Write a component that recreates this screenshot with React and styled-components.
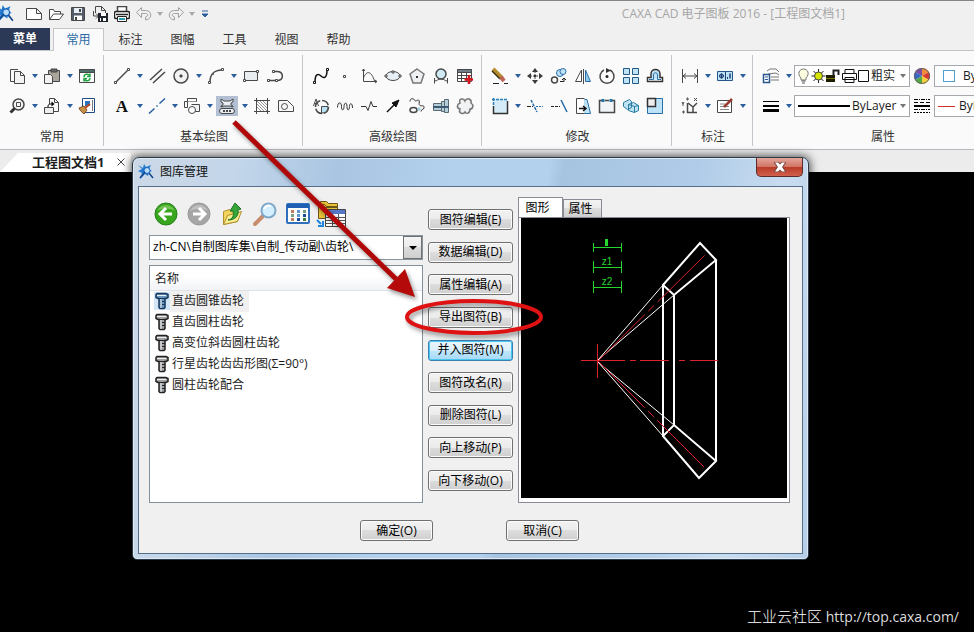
import React from "react";
import styled, { createGlobalStyle } from "styled-components";

const ink = "#484848";
const blue = "#2a6ea8";
const sky = "#bfe3f6";

const icons = {
  new: <path d="M.5 2.5h10l5 5v6H.5zM10.5 2.5v5h5" fill="#fff" />,
  open: (
    <path d="M1.5 13.5v-10h4l1 2h6v2.500M1.5 13.5l4-5.500h10l-4 5.500z" fill="#fff" />
  ),
  save: (
    <>
      <path d="M1.5 1.5h13v13h-13z" fill="#555d6a" />
      <path d="M4 2h8v5H4z" fill="#e8eef4" stroke="none" />
      <path d="M4 9.5h8V14H4z" fill="#fff" stroke="none" />
      <path d="M9 3h2v3H9zM5 11h2v3H5z" fill="#444" stroke="none" />
    </>
  ),
  saveAs: (
    <>
      <path d="M3.5 7V.5h6l4 4V7M9.5.5v4h4M1.5 5v5h5M4 7.5L6.5 10 4 12.5" />
      <path d="M6 7h10v9H6z" fill="#20242c" stroke="none" />
      <path d="M9 7h5v3H9zM8 12h6v3H8z" fill="#fff" stroke="none" />
      <path d="M9 12h2v3H9z" fill="#20242c" stroke="none" />
    </>
  ),
  print: (
    <>
      <path d="M3.5 5.5v-5h9v5" fill="#fff" strokeWidth="1.5" />
      <rect x=".5" y="5.5" width="15" height="7" rx="1.5" fill="#fff" strokeWidth="1.5" stroke="#222" />
      <path d="M2 8.5h12" stroke="#222" strokeWidth="1.5" />
      <path d="M3.5 10.5h9v5h-9z" fill="#fff" stroke="#222" />
      <path d="M5 12h6v2H5z" fill="#2a9aa8" stroke="none" />
    </>
  ),
  undo: (
    <path d="M.5 6.5l5-5v3h4c7 0 7 9 0 9.500v-3c3-.5 3-3.500 0-3.500h-4v4z" stroke="#a0a0a0" />
  ),
  redo: (
    <path d="M15.5 6.5l-5-5v3h-4c-7 0-7 9 0 9.500v-3c-3-.5-3-3.500 0-3.500h4v4z" stroke="#a0a0a0" />
  ),
  copy: (
    <>
      <path d="M9 1.5H1.5v12H5" />
      <path d="M5.5 3.5h6l4 4v8h-10zM11.5 3.5v4h4" fill="#f4f4f4" />
    </>
  ),
  paste: (
    <>
      <path d="M4.5 2.5h11v11h-11z" fill="#aaa59c" />
      <path d="M7 1h6v3H7z" fill="#666" stroke="#444" />
      <path d="M.5 6.5h6l2 2v7h-8z" fill="#f2f2f2" />
    </>
  ),
  refresh: (
    <>
      <path d="M.5 1.5h15v13H.5z" fill="#fff" />
      <path d="M.5 1.5h15v3H.5z" fill="#4c6f6a" />
      <path d="M5 9c0-3 4-4 6-1M11 5.5v3H8M11 10c0 3-4 4-6 1M5 13.5v-3h3" stroke="#23a246" strokeWidth="1.5" />
    </>
  ),
  zoom: (
    <>
      <circle cx="9.5" cy="6.5" r="5.5" strokeWidth="1.5" fill="#f5f5f5" />
      <path d="M7.5 4.5h4v4h-4z" />
      <path d="M5.5 10.5l-4 4" strokeWidth="3" stroke="#333" />
    </>
  ),
  insert: (
    <>
      <path d="M5.5 6V.5h5l4 4v9H10M10.5.5v4h4" />
      <path d="M.5 9.5h9v6h-9z" fill="#eee" />
      <path d="M4 9c0-3 1-3 4-3" stroke="#000" />
      <path d="M7.5 3.5l3 2.500-3 2.500z" fill="#000" stroke="none" />
    </>
  ),
  brush: (
    <>
      <path d="M3.5.5h12v14h-12z" fill="#fff" stroke="#234a80" />
      <path d="M6 3h5v5H6z" fill="#2d72bd" stroke="none" />
      <path d="M13.5 2v11" stroke="#777" />
      <path d="M0 10l5-2 3 4-3 4c-2-2-4-3-5-6z" fill="#c89146" stroke="#7b5428" />
      <path d="M6 10l5-4" stroke="#b94522" strokeWidth="2" />
    </>
  ),
  line: (
    <>
      <path d="M2 14L14 2" strokeWidth="1.5" />
      <path d="M.5 13.5h2v2h-2zM13.5.5h2v2h-2z" fill="#fff" />
    </>
  ),
  parallel: <path d="M1 12L13 1M4 15L16 4" strokeWidth="1.5" />,
  circle: (
    <>
      <circle cx="8" cy="8" r="7" fill="#f2f2f2" strokeWidth="1.5" />
      <path d="M7 7h2v2H7z" fill="#444" />
    </>
  ),
  arc: (
    <>
      <path d="M2 14C2 7 6 2 14 2" strokeWidth="1.5" />
      <path d="M.5 13.5h2v2h-2zM13.5.5h2v2h-2zM4.5 5.5h1v1h-1z" fill="#fff" />
    </>
  ),
  rect: (
    <>
      <path d="M1.5 3.5h13v9h-13z" fill="#e9edf0" />
      <path d="M.5 11.5h2v2h-2zM13.5 2.5h2v2h-2z" fill="#fff" />
    </>
  ),
  polyline: (
    <>
      <path d="M2 12.5h7M6 3.5h4c7 0 7 9 1 9" strokeWidth="1.5" />
      <path d="M.5 11.5h2v2h-2zM8.5 11.5h2v2h-2zM5.5 2.5h2v2h-2z" fill="#fff" />
    </>
  ),
  text: (
    <text x="8" y="14" textAnchor="middle" fontFamily="Liberation Serif" fontWeight="bold" fontSize="17" fill="#111" stroke="none">
      A
    </text>
  ),
  center: (
    <path d="M0 15.5l5.500-5M7.5 8.500l1-1M10.5 5.500L16 .5" stroke="#245da0" strokeWidth="1.5" />
  ),
  combine: (
    <>
      <path d="M3.5 9.5h-3v-6h3M12.5 4V.5h-9v9" />
      <path d="M3.5 3.5h9" stroke="#999" />
      <path d="M7.5 6.5h8v7H9" fill="#eef3f6" />
      <circle cx="8" cy="12" r="3.5" fill="#fff" />
    </>
  ),
  block: (
    <>
      <path d="M2 1l3 2h6l3-2v3l-2 1v2l2 1v1l-3-1H5L2 9V8l2-1V5L2 4z" fill="#e8eef3" />
      <rect x=".5" y="10.5" width="15" height="5" rx="2.5" fill="#e8eef3" />
      <path d="M4 13h2M7 13h2M10 13h2" strokeWidth="2" />
    </>
  ),
  hatch: (
    <>
      <path d="M3 6l7 7M3 3l10 10M6 3l7 7M9 3l4 4M3 9l4 4" stroke="#999" />
      <path d="M2.5 0v16M13.5 0v16M0 2.5h16M0 13.5h16" />
    </>
  ),
  contour: (
    <>
      <path d="M.5 2.5h9l6 6v5H.5z" fill="#f8f8f8" />
      <circle cx="6.5" cy="8.5" r="3" />
    </>
  ),
  spline: (
    <>
      <path d="M2 14c0-8 3-9 6-6s6 2 6-6" strokeWidth="1.5" stroke="#111" />
      <path d="M.5 13.5h2v2h-2zM13.5.5h2v2h-2z" fill="#fff" stroke="#111" />
    </>
  ),
  point: <path d="M6.5 7.5h2v2h-2z" />,
  formula: (
    <path d="M2.5 1v12.500H16M1 3l1.500-2L4 3M14 12l2 1.500-2 1.500M2.5 10c3-8 8-7 11 3" />
  ),
  ellipse: (
    <>
      <ellipse cx="8" cy="8" rx="7" ry="4.5" fill="#e6eff3" />
      <path d="M0 7h2v2H0zM14 7h2v2h-2zM7 3h2v2H7z" fill="#fff" />
    </>
  ),
  polygon: (
    <>
      <path d="M8 1l7 5-3 9H4L1 6z" fill="#eef1f3" strokeWidth="1.5" stroke="#777" />
      <path d="M7 8h2v2H7z" fill="#333" stroke="none" />
    </>
  ),
  hole: (
    <>
      <circle cx="8" cy="6" r="5" fill="#cfeaf4" strokeWidth="1.5" />
      <path d="M1.5 10v5.500M14.5 10v5.500M1.5 13c3 0 3-2 6.500-2s3.500 2 6.500 2" />
    </>
  ),
  table: (
    <>
      <path d="M.5 1.5h14v12H.5z" fill="#fff" />
      <path d="M.5 1.5h14v3H.5z" fill="#707c88" />
      <path d="M.5 7.5h14M.5 10.5h14M4.5 4v9M9.5 4v9" />
      <path d="M12 7v9M7.5 11.5h8.500" stroke="#d5151d" strokeWidth="2.5" />
    </>
  ),
  detail: (
    <>
      <circle cx="9" cy="9" r="6.5" strokeDasharray="8 2" strokeWidth="1.5" />
      <path d="M8.5 8.5H15c0 4-2 6.500-6.500 6.500z" fill="#b8e2f2" />
      <path d="M.5 8L3 1l2.500 7M1.5 5.5h3" />
    </>
  ),
  wave: (
    <path d="M.5 9.500c0-6 4-6 4-1s2.500 4 2.500 0 3-5 3 0 2.500 4 2.500 0 3-4 3 1.500" stroke="#333" />
  ),
  breakLine: <path d="M0 8.5h5l2 4 3-9 2 5h4" stroke="#333" />,
  arrow: (
    <>
      <path d="M2 14l9-9" stroke="#111" strokeWidth="1.5" />
      <path d="M14 2L7 5l4 4z" fill="#111" stroke="#111" />
    </>
  ),
  gear: (
    <>
      <path d="M1 3.5c0-4 4-3 5-1s3-2 4 0-1 4 1 5 4-1 4 2-3 1-3 4" stroke="#333" />
      <ellipse cx="4.5" cy="12" rx="3.5" ry="2.5" strokeWidth="1.5" />
      <path d="M9 12l2-2" stroke="#9acde0" strokeWidth="3" />
    </>
  ),
  shaft: (
    <>
      <path d="M.5 5.5h8v7h-8zM8.5 3.5h3v10h-3zM11.5 1.5h4v13h-4z" fill="#b5cfda" stroke="#5a6a72" />
      <path d="M0 8h16v2H0z" fill="#3d5a72" stroke="none" />
    </>
  ),
  cloud: (
    <path d="M8 3c2-4 7-2 6 2 3 2 2 6-1 6 0 5-4 5-5 3-2 3-7 1-5-3-4-1-3-5 0-6-2-5 4-5 5-2z" fill="#f0f2f4" stroke="#777" strokeWidth="1.5" />
  ),
  erase: (
    <>
      <path d="M1 1l9 9" stroke="#b58b2d" strokeWidth="4" />
      <path d="M0 3l8 8" stroke="#3a2c10" strokeWidth="1.5" />
      <path d="M9 9l3 4" stroke="#bc6257" strokeWidth="4" />
      <path d="M1 15.5h6M12 15.5h4" stroke="#222" />
    </>
  ),
  move: (
    <>
      <path d="M8 0l3 4H5zM8 16l3-4H5zM0 8l4-3v6zM16 8l-4-3v6z" fill="#3a3a3a" stroke="none" />
      <path d="M8 3v10M3 8h10" strokeDasharray="2 1" />
      <path d="M7 7h2v2H7z" fill="#333" stroke="none" />
    </>
  ),
  duplicate: (
    <>
      <circle cx="9" cy="5" r="3.5" fill={sky} stroke={blue} />
      <circle cx="12" cy="3.5" r="3" fill={sky} stroke={blue} />
      <circle cx="3.5" cy="12" r="3" fill="#fff" strokeWidth="1.5" />
      <path d="M9 13.5h4V11M11 12l2-2 2 2" stroke="#222" />
    </>
  ),
  mirror: (
    <>
      <path d="M6.5 2v11.500H.5zM8.5 1v15" fill="#fff" />
      <path d="M10.5 2v11.500h5z" fill="#8fcbea" stroke={blue} />
    </>
  ),
  rotate: (
    <>
      <path d="M11 2a7 7 0 1 1-6 0" strokeWidth="1.5" />
      <path d="M7 0l5 2.500L7 5z" fill="#333" stroke="none" />
      <circle cx="8" cy="8.5" r="1.5" fill="#222" stroke="none" />
    </>
  ),
  array: (
    <path d="M.5.5h6v6h-6zM9.5.5h6v6h-6zM.5 9.5h6v6h-6zM9.5 9.5h6v6h-6z" fill={sky} stroke="#245a86" />
  ),
  offset: (
    <>
      <path d="M4.500 11.500V6c0-5 8-5 8 0v5.500z" fill={sky} stroke="none" />
      <path d="M.5 13.500v-4H4V6c0-6 9-6 9 0v3.500h2.500v4z" strokeWidth="1.5" stroke="#333" />
      <path d="M2 11.500h4.500V7c0-3 4-3 4 0v4.500H14" stroke={blue} />
    </>
  ),
  region: (
    <>
      <path d="M1.5 1.5h14v14h-14z" fill="#d5ecf8" stroke="none" />
      <path d="M1.5 8v7.500h14V3" stroke="#333" strokeWidth="1.5" />
      <path d="M0 1.5h16M1.5 0v8" stroke="#2a7fb8" strokeDasharray="3 1" strokeWidth="1.5" />
    </>
  ),
  trim: (
    <>
      <path d="M0 8.5h6" stroke="#222" strokeDasharray="4 1" />
      <path d="M4 2l6 12" stroke={blue} strokeWidth="1.5" strokeDasharray="3 1" />
      <path d="M9 8.5h7" stroke={blue} strokeDasharray="2 1" />
    </>
  ),
  extend: (
    <>
      <path d="M0 8.5h9" stroke="#222" strokeDasharray="3 1" />
      <path d="M10 2l6 12" stroke={blue} strokeWidth="1.5" />
    </>
  ),
  stretch: (
    <>
      <path d="M9 1.5h3l3.500 14H9z" fill={sky} stroke={blue} />
      <path d="M9.5.5h-8v15h8" fill="#fff" />
      <path d="M4 10.5h6M8 8l3 2.500L8 13" stroke="#111" strokeWidth="1.5" />
    </>
  ),
  breakAt: (
    <>
      <path d="M3 2.5H.5v12h15v-12H13M6 2.5h4" fill="#f2f5f7" strokeWidth="1.5" />
      <path d="M2.5 1h3v3h-3zM10.5 1h3v3h-3z" fill="#2474ad" stroke="none" />
    </>
  ),
  explode: (
    <path d="M.5 4.5l6-3 2 2v6l-4 2-4-3zM5.5 6.5l5-2 5 3v5l-4 2-6-2zM5.5 6.5l6 2v6M11.5 8.5l4-1" fill={sky} stroke="#287b9c" />
  ),
  scale: (
    <>
      <path d="M.5.5h15v15H.5z" fill={sky} stroke={blue} />
      <path d="M.5.5h8v8h-8z" fill="#eee" stroke="#333" strokeWidth="1.5" />
    </>
  ),
  dimension: <path d="M.5 1v14M15.5 1v14M1 8h14M4 5.5L1 8l3 2.500M12 5.5L15 8l-3 2.500" />,
  tolerance: (
    <>
      <path d="M.5 3.5h15v9H.5z" fill={sky} stroke="#27568b" />
      <path d="M8.5 3.5v9M2 8h5M4.5 5.5v5" stroke="#1e3f73" />
      <path d="M13 5.5v5" stroke="#1e3f73" strokeWidth="1.5" />
      <path d="M10 9h1v2h-1z" fill="#1e3f73" stroke="none" />
      <circle cx="4.5" cy="8" r="2" stroke="#1e3f73" />
    </>
  ),
  coordinate: (
    <>
      <path d="M5.5 5v9.500H15M6 5l5 4v5M11 9l4-4" strokeWidth="1.5" />
      <path d="M0 4l1 2 1-2M1 6v2M12 0l3 3M15 0l-3 3M5 0h1v2H5zM1 13h1v2H1z" />
    </>
  ),
  note: (
    <>
      <path d="M.5 2.5h14v12H.5z" fill="#fff" />
      <path d="M3 6h5M3 8.5h9M3 11.5h9" stroke="#888" />
      <path d="M15 1L7 9" stroke="#9a3b31" strokeWidth="2.5" />
    </>
  ),
  layers: (
    <>
      <path d="M4 3l3-2h6l3 3M5 6l8-1 3 2M8 9h8M8 12h8" stroke="#777" />
      <path d="M.5 6.5h6v8h-6z" fill="#fff" stroke="#29568c" strokeWidth="1.5" />
      <path d="M2 9h3M2 11.5h3" stroke="#29568c" />
    </>
  ),
  weights: (
    <>
      <path d="M0 3.5h16" stroke="#000" />
      <path d="M0 8h16" stroke="#000" strokeWidth="2" />
      <path d="M0 12.5h16" stroke="#000" strokeWidth="3" />
    </>
  ),
  linetypes: (
    <>
      <path d="M0 1.5h16M0 11.5h16" stroke="#000" strokeDasharray="4 1 1 1" />
      <path d="M0 4.5h16" stroke="#000" strokeDasharray="4 2" />
      <path d="M0 8h16" stroke="#000" strokeWidth="2" />
      <path d="M0 14.5h16" stroke="#000" strokeDasharray="2 1" />
    </>
  ),
};

// "v" after a name stands for a tool with a drop-down of its own
const groups = [
  {
    label: "常用",
    rows: [
      ["copy", "v", "paste", "v", "refresh"],
      ["zoom", "v", "insert", "v", "brush"],
    ],
  },
  {
    label: "基本绘图",
    rows: [
      ["line", "v", "parallel", "circle", "v", "arc", "v", "rect", "polyline"],
      ["text", "v", "center", "v", "combine", "v", "block", "v", "hatch", "contour"],
    ],
  },
  {
    label: "高级绘图",
    rows: [
      ["spline", "point", "formula", "ellipse", "polygon", "hole", "table"],
      ["detail", "wave", "breakLine", "arrow", "gear", "shaft", "cloud"],
    ],
  },
  {
    label: "修改",
    rows: [
      ["erase", "v", "move", "duplicate", "mirror", "rotate", "array", "offset"],
      ["region", "v", "trim", "extend", "stretch", "breakAt", "explode", "scale"],
    ],
  },
  {
    label: "标注",
    rows: [
      ["dimension", "v", "tolerance", "v"],
      ["coordinate", "v", "note", "v"],
    ],
  },
];

const tabs = ["常用", "标注", "图幅", "工具", "视图", "帮助"];

const parts = [
  "直齿圆锥齿轮",
  "直齿圆柱齿轮",
  "高变位斜齿圆柱齿轮",
  "行星齿轮齿齿形图(Σ=90°)",
  "圆柱齿轮配合",
];

const actions = [
  "图符编辑(E)",
  "数据编辑(D)",
  "属性编辑(A)",
  "导出图符(B)",
  "并入图符(M)",
  "图符改名(R)",
  "删除图符(L)",
  "向上移动(P)",
  "向下移动(O)",
];

function Icon({ name }) {
  return (
    <svg width="16" height="16" viewBox="0 0 16 16" fill="none" stroke={ink} aria-hidden="true">
      {icons[name]}
    </svg>
  );
}

function Caret({ color = "#2c5f9e" }) {
  return (
    <svg width="6" height="4" viewBox="0 0 6 4" aria-hidden="true">
      <path d="M0 0h6L3 4z" fill={color} />
    </svg>
  );
}

function Logo({ size = 16 }) {
  return (
    <svg width={size} height={size} viewBox="0 0 16 16" fill="none" aria-hidden="true">
      <path d="M0 1l5 3 1-4 2 3 5-2-2 4 3 2-3 1-1 4-3-2-5 5 2-6-4-2 4-2z" fill="#2379cf" />
      <circle cx="9" cy="6.5" r="3" fill="#b9dcf8" stroke="#1461b8" />
      <path d="M11 9l4 5M2 14l5-6" stroke="#12488d" strokeWidth="1.5" />
    </svg>
  );
}

function Tool({ name }) {
  if (name === "v") {
    return (
      <MoreButton aria-label="更多">
        <Caret />
      </MoreButton>
    );
  }
  return (
    <ToolButton aria-label={name} $active={name === "block"}>
      <Icon name={name} />
    </ToolButton>
  );
}

function LayerIcons() {
  return (
    <svg width="71" height="16" viewBox="0 0 71 16" fill="none" aria-hidden="true">
      <path d="M3 10C-1 6 1 1 5.5 1S12 6 8 10v2H3z" fill="#fffde0" stroke="#777" />
      <path d="M3.5 13h4M4 15h3" stroke="#555" />
      <path d="M20.5 1v14M13.5 8h14M15.5 3l10 10M25.5 3l-10 10" stroke="#222" />
      <circle cx="20.5" cy="8" r="4" fill="#d7e600" stroke="#444" />
      <path d="M28 7h9v7h-9z" fill="#1c1c00" />
      <path d="M28 10.5h9" stroke="#777700" />
      <path d="M35.5 7V2.500h5V7" stroke="#222" strokeWidth="2" />
      <path d="M47 5V1.500h9V5M44.5 5.5h14v6h-14zM47 9.500h9v5h-9z" fill="#fff" stroke="#111" />
      <path d="M60.5 2.5h10v11h-10z" fill="#fff" stroke="#111" />
    </svg>
  );
}

function ColorWheel() {
  return (
    <svg width="16" height="16" viewBox="0 0 16 16" aria-hidden="true">
      <path d="M8 8V0a8 8 0 0 1 7 4z" fill="#ef8c3a" />
      <path d="M8 8V0a8 8 0 0 0-7 4z" fill="#7a4fa0" />
      <path d="M8 8l7-4a8 8 0 0 1 0 8z" fill="#d8392e" />
      <path d="M8 8L1 4a8 8 0 0 0 0 8z" fill="#3768c4" />
      <path d="M8 8l7 4a8 8 0 0 1-7 4z" fill="#f1cf3b" />
      <path d="M8 8l-7 4a8 8 0 0 0 7 4z" fill="#55a845" />
      <circle cx="8" cy="8" r="7.5" fill="none" stroke="#666" />
    </svg>
  );
}

function PropertyGroup() {
  return (
    <Group>
      <ToolRow>
        <Tool name="layers" />
        <Tool name="v" />
        <Combo>
          <LayerIcons />
          <select aria-label="图层">
            <option>粗实</option>
          </select>
          <Caret color="#777" />
        </Combo>
        <ToolButton aria-label="颜色">
          <ColorWheel />
        </ToolButton>
        <Combo>
          <Swatch />
          <select aria-label="当前颜色">
            <option>ByLayer</option>
          </select>
        </Combo>
      </ToolRow>
      <ToolRow>
        <Tool name="weights" />
        <Tool name="v" />
        <Combo>
          <Stroke />
          <select aria-label="线宽">
            <option>ByLayer</option>
          </select>
          <Caret color="#777" />
        </Combo>
        <Tool name="linetypes" />
        <Combo>
          <Stroke $thin />
          <select aria-label="线型">
            <option>ByLayer</option>
          </select>
        </Combo>
      </ToolRow>
      <GroupLabel $inset>属性</GroupLabel>
    </Group>
  );
}

function LibraryToolbar() {
  return (
    <LibraryTools>
      <button aria-label="后退">
        <svg width="24" height="24" viewBox="0 0 24 24">
          <circle cx="12" cy="12" r="11" fill="#37a51d" stroke="#26801a" />
          <path d="M3 9a10 10 0 0 1 18 0c-5-3-13-3-18 0z" fill="#8bd06b" opacity=".7" />
          <path d="M18 12H7M12 6l-6 6 6 6" fill="none" stroke="#fff" strokeWidth="3" />
        </svg>
      </button>
      <button aria-label="前进">
        <svg width="24" height="24" viewBox="0 0 24 24">
          <circle cx="12" cy="12" r="11" fill="#a6a6a6" stroke="#999" />
          <path d="M3 9a10 10 0 0 1 18 0c-5-3-13-3-18 0z" fill="#ccc" opacity=".7" />
          <path d="M6 12h11M12 6l6 6-6 6" fill="none" stroke="#fff" strokeWidth="3" />
        </svg>
      </button>
      <button aria-label="向上">
        <svg width="24" height="24" viewBox="0 0 24 24">
          <path d="M3.5 9.5l6-2 2 2 6-2v12l-14 3z" fill="#f2d35e" stroke="#b18f2a" />
          <path d="M3.5 22.5l4-9 14-4-4 10z" fill="#fbeb91" stroke="#b18f2a" />
          <path d="M8 18c5-1 6-4 5-9h-3l5-8 6 6-3 1c1 6-3 10-10 10z" fill="#37a53a" stroke="#1c7325" />
        </svg>
      </button>
      <button aria-label="查找">
        <svg width="24" height="24" viewBox="0 0 24 24">
          <path d="M2 22l8-8" stroke="#c78d6c" strokeWidth="4" strokeLinecap="round" />
          <circle cx="15.5" cy="8.5" r="7" fill="#d4efff" stroke="#7fa9ca" strokeWidth="2" />
          <path d="M11 7c1-3 4-4 7-3" stroke="#fff" strokeWidth="2" fill="none" />
        </svg>
      </button>
      <button aria-label="视图">
        <svg width="24" height="24" viewBox="0 0 24 24">
          <rect x="1" y="2" width="22" height="19" rx="1" fill="#fff" stroke="#2f6fbb" strokeWidth="2" />
          <path d="M1 2h22v4H1z" fill="#1f60b5" />
          <path d="M5 8h3v3H5zM5 16h3v3H5z" fill="#bf7c5d" />
          <path d="M5 12h3v3H5zM17 8h3v3h-3z" fill="#7c9a80" />
          <path d="M11 8h3v3h-3zM11 12h3v3h-3z" fill="#5e93cf" />
          <path d="M11 16h3v3h-3zM17 12h3v3h-3z" fill="#1d4a9a" />
          <path d="M17 16h3v3h-3z" fill="#3f7d3f" />
        </svg>
      </button>
      <button aria-label="导入">
        <svg width="30" height="30" viewBox="0 0 30 30">
          <path d="M4.5 2.5h6l2 2h9v4h-17zM2.5 5.5h6l2 2h11v12h-19z" fill="#eac238" stroke="#6b5718" />
          <path d="M9.5 10.5h20v17h-20z" fill="#fff" stroke="#444" />
          <path d="M10 11h19v4H10z" fill="#5778c8" />
          <path d="M10 18.5h19M10 21.5h19M10 24.5h19M16.5 15v12M22.5 15v12" stroke="#555" />
          <path d="M1 21l4 4M7 22v5H2" stroke="#1c86df" strokeWidth="2" fill="none" />
        </svg>
      </button>
    </LibraryTools>
  );
}

function Bolt({ selected }) {
  const line = selected ? "#16375c" : "#222";
  return (
    <svg width="16" height="18" viewBox="0 0 16 18" aria-hidden="true">
      <path d="M3 1.5h9l2 1v3l-2 1h-1v9l-1 1H6l-1-1v-9H4l-2-1v-3z" fill={selected ? "#6d97bc" : "#a2a2a2"} stroke={line} strokeWidth="1.5" />
      <path d="M3 3.5h9M7 6v10" stroke="#e8f0f5" />
      <path d="M5 6.5h6M8 9.5h3M8 12.5h3" stroke={line} />
    </svg>
  );
}

function GearPreview() {
  return (
    <Preview viewBox="521 218 266 280" preserveAspectRatio="none" role="img" aria-label="图形">
      <g stroke="#fff" fill="none">
        <path d="M663 285L598 360L674 295M663 436L598 362L674 425" />
        <path
          d="M663 285L700 243L716 260L674 295zM663 436L699 478L716 461L674 425zM663 285v151M674 295v130M716 260v201"
          strokeWidth="2"
        />
      </g>
      <g stroke="#d8222c" fill="none">
        <path d="M581 360.5h44M630 360.5h6M640 360.5h29M679 360.5h6M690 360.5h28M597.5 344v34" />
        <path d="M598 361L707 253M598 361L707 470" strokeDasharray="66 5 8 5" />
      </g>
      <g stroke="#28d52f" fill="none">
        <path d="M593.5 243v9M621.5 243v9M594 247.5h28M593.5 261v12M621.5 261v12M594 267.5h28M593.5 281v12M621.5 281v12M594 287.5h28" />
        <path d="M606.5 239v7" strokeWidth="3" />
      </g>
      <g fill="#28d52f" fontFamily="Liberation Sans" fontSize="10" textAnchor="middle">
        <text x="607" y="265">z1</text>
        <text x="607" y="285">z2</text>
      </g>
    </Preview>
  );
}

function LibraryDialog() {
  return (
    <Dialog role="dialog" aria-label="图库管理">
      <DialogTitle>
        <Logo />
        <h2>图库管理</h2>
        <CloseButton aria-label="关闭">
          <svg width="12" height="10" viewBox="0 0 12 10">
            <path d="M1 .5h3l2 2 2-2h3L8 5l3 4.500H8l-2-2-2 2H1L4 5z" fill="none" stroke="#744" strokeWidth="2" />
            <path d="M1 .5h3l2 2 2-2h3L8 5l3 4.500H8l-2-2-2 2H1L4 5z" fill="#fff" />
          </svg>
        </CloseButton>
      </DialogTitle>
      <Client>
        <Columns>
          <Browser>
            <LibraryToolbar />
            <PathBox>
              <select aria-label="路径">
                <option>{"zh-CN\\自制图库集\\自制_传动副\\齿轮\\"}</option>
              </select>
              <PathArrow>
                <svg width="8" height="4" viewBox="0 0 8 4">
                  <path d="M0 0h8L4 4z" fill="#000" />
                </svg>
              </PathArrow>
            </PathBox>
            <ListBox>
              <PartTable>
                <thead>
                  <tr>
                    <th>名称</th>
                  </tr>
                </thead>
                <tbody>
                  {parts.map((part, i) => (
                    <PartRow key={part} $selected={i === 0}>
                      <td>
                        <Bolt selected={i === 0} />
                        <span>{part}</span>
                      </td>
                    </PartRow>
                  ))}
                </tbody>
              </PartTable>
            </ListBox>
          </Browser>
          <Actions>
            {actions.map((action, i) => (
              <PushButton key={action} $focused={i === 4}>
                {action}
              </PushButton>
            ))}
          </Actions>
          <Viewer>
            <ViewerTabs role="tablist">
              <ViewerTab role="tab" aria-selected="true" $active>
                图形
              </ViewerTab>
              <ViewerTab role="tab" aria-selected="false">
                属性
              </ViewerTab>
            </ViewerTabs>
            <ViewerPane>
              <GearPreview />
            </ViewerPane>
          </Viewer>
        </Columns>
        <DialogFooter>
          <PushButton>确定(O)</PushButton>
          <PushButton>取消(C)</PushButton>
        </DialogFooter>
      </Client>
    </Dialog>
  );
}

export default function App() {
  return (
    <Page>
      <GlobalStyle />
      <TitleBar>
        <QuickTools>
          <Logo size={18} />
          <QuickGroup>
            {["new", "open", "save", "saveAs", "print", "undo"].map((name) => (
              <QuickButton key={name} aria-label={name} $width={22}>
                <Icon name={name} />
              </QuickButton>
            ))}
            <QuickButton aria-label="撤销列表" $width={10}>
              <Caret color="#aaa" />
            </QuickButton>
            <QuickButton aria-label="redo" $width={22}>
              <Icon name="redo" />
            </QuickButton>
            <QuickButton aria-label="恢复列表" $width={10}>
              <Caret color="#aaa" />
            </QuickButton>
            <QuickButton aria-label="自定义" $width={16}>
              <svg width="6" height="8" viewBox="0 0 6 8">
                <path d="M0 1h6M0 4h6L3 7z" fill="#2c5f9e" stroke="#2c5f9e" />
              </svg>
            </QuickButton>
          </QuickGroup>
        </QuickTools>
        <WindowTitle>CAXA CAD 电子图板 2016 - [工程图文档1]</WindowTitle>
      </TitleBar>
      <TabBar>
        <MenuButton>菜单</MenuButton>
        {tabs.map((tab, i) => (
          <TabButton key={tab} $active={i === 0}>
            {tab}
          </TabButton>
        ))}
      </TabBar>
      <Ribbon>
        {groups.map((group) => (
          <Group key={group.label}>
            {group.rows.map((row, i) => (
              <ToolRow key={i}>
                {row.map((name, j) => (
                  <Tool key={j} name={name} />
                ))}
              </ToolRow>
            ))}
            <GroupLabel>{group.label}</GroupLabel>
          </Group>
        ))}
        <PropertyGroup />
      </Ribbon>
      <DocumentBar>
        <DocumentTab>
          <strong>工程图文档1</strong>
          <button aria-label="关闭文档">
            <svg width="8" height="8" viewBox="0 0 8 8">
              <path d="M.5.5l7 7M7.5.5l-7 7" stroke="#444" />
            </svg>
          </button>
        </DocumentTab>
      </DocumentBar>
      <Canvas>
        <Credit>
          <span>工业云社区</span> http://top.caxa.com/
        </Credit>
      </Canvas>
      <LibraryDialog />
      <Callout width="560" height="350" viewBox="0 0 560 350" aria-hidden="true">
        <path d="M234 122L396 279" stroke="#b00808" strokeWidth="5" />
        <path d="M415 297L387 288L405 269z" fill="#b50a0a" />
        <ellipse cx="474" cy="317" rx="67" ry="16" fill="none" stroke="#de1212" strokeWidth="4" />
      </Callout>
    </Page>
  );
}

const GlobalStyle = createGlobalStyle`
  * {
    box-sizing: border-box;
  }
  body {
    margin: 0;
    background: #000;
  }
  body, button, select {
    font-family: "Open Sans", "Noto Sans CJK SC", sans-serif;
    font-size: 12px;
    line-height: 16px;
    color: #1c1c1c;
  }
  button {
    padding: 0;
    border: 0;
    background: none;
  }
  select {
    appearance: none;
    border: 0;
    padding: 0;
    background: none;
  }
  svg {
    display: block;
    flex: none;
  }
`;

const Page = styled.div`
  position: relative;
  display: flex;
  flex-direction: column;
  min-height: 100vh;
  overflow: hidden;
`;

const TitleBar = styled.header`
  display: flex;
  align-items: center;
  height: 28px;
  padding-bottom: 1px;
  border-top: 1px solid #858585;
  background: #f0f0f0;
`;

const QuickTools = styled.div`
  display: flex;
  align-items: center;
  gap: 9px;
  margin-left: -4px;
`;

const QuickGroup = styled.div`
  display: flex;
  align-items: center;
`;

const QuickButton = styled.button`
  display: flex;
  justify-content: center;
  width: ${(props) => props.$width}px;
`;

const WindowTitle = styled.h1`
  margin: 0 129px 0 auto;
  font-size: 12px;
  font-weight: normal;
  color: #a6a6a6;
`;

const TabBar = styled.nav`
  display: flex;
  gap: 1px;
  height: 23px;
  background: #f0f0f0;
  border-bottom: 1px solid #c4c6ca;
`;

const MenuButton = styled.button`
  width: 50px;
  margin-right: 2px;
  background: #2b3957;
  color: #fff;
  font-weight: bold;
`;

const TabButton = styled.button`
  width: 51px;
  height: 23px;
  border: 1px solid ${(props) => (props.$active ? "#c4c6ca" : "transparent")};
  border-bottom: 0;
  background: ${(props) => (props.$active ? "#fafafa" : "none")};
  color: ${(props) => (props.$active ? "#2a6aa6" : "#333")};
`;

const Ribbon = styled.section`
  display: flex;
  padding: 4px 0 3px;
  background: #fafafa;
  border-bottom: 1px solid #b4bac0;
  overflow: hidden;
`;

const Group = styled.div`
  flex: none;
  padding: 6px 4px 0 6px;
  border-right: 1px solid #c2c5ca;

  &:first-child {
    padding-left: 5px;
  }
`;

const ToolRow = styled.div`
  display: flex;
  align-items: center;
  height: 30px;
`;

const ToolButton = styled.button`
  display: flex;
  align-items: center;
  justify-content: center;
  width: ${(props) => (props.$active ? 22 : 24)}px;
  height: 20px;
  margin: 0 ${(props) => (props.$active ? 1 : 0)}px;
  background: ${(props) => (props.$active ? "#b2bfd3" : "none")};

  > svg {
    overflow: visible;
  }
`;

const MoreButton = styled.button`
  display: flex;
  align-items: center;
  justify-content: center;
  width: 11px;
  height: 20px;
`;

const GroupLabel = styled.div`
  height: 25px;
  padding: 8px 0 0 ${(props) => (props.$inset ? 112 : 0)}px;
  text-align: ${(props) => (props.$inset ? "left" : "center")};
  color: #333;
`;

const Combo = styled.div`
  display: flex;
  align-items: center;
  gap: 2px;
  width: 116px;
  height: 22px;
  padding: 0 3px;
  border: 1px solid #a5a8ad;
  background: #fff;

  > select {
    flex: 1;
    min-width: 0;
  }
`;

const Swatch = styled.span`
  width: 12px;
  height: 12px;
  margin: 0 6px 0 5px;
  border: 1px solid #4da0cf;
`;

const Stroke = styled.span`
  width: ${(props) => (props.$thin ? 17 : 52)}px;
  height: ${(props) => (props.$thin ? 1 : 2)}px;
  margin-right: ${(props) => (props.$thin ? 2 : 0)}px;
  background: ${(props) => (props.$thin ? "#d0302c" : "#000")};
`;

const DocumentBar = styled.div`
  height: 22px;
  padding-top: 3px;
  background: #ececec;
`;

const DocumentTab = styled.div`
  display: flex;
  align-items: center;
  gap: 13px;
  width: 131px;
  height: 19px;
  padding: 0 0 2px 32px;
  background: #fff;
  clip-path: polygon(0 100%, 18px 0, 100% 0, 100% 100%);

  > strong {
    font-size: 13px;
  }
`;

const Canvas = styled.main`
  display: flex;
  flex: 1;
  align-items: flex-end;
  justify-content: flex-end;
  padding: 0 15px 5px;
  background: #000;
`;

const Credit = styled.p`
  margin: 0;
  font-size: 14px;
  line-height: 20px;
  color: #dcdcdc;

  > span {
    font-size: 15px;
    font-weight: 300;
    color: #fff;
  }
`;

const Dialog = styled.div`
  position: absolute;
  top: 157px;
  left: 132px;
  display: flex;
  flex-direction: column;
  width: 677px;
  height: 403px;
  padding: 0 5px 5px;
  border: 1px solid #2c3a49;
  border-radius: 7px 7px 5px 5px;
  background: linear-gradient(
      100deg,
      #ccd8e6 0%,
      #c3d6ea 14%,
      #a9c5e2 28%,
      #b3d0ec 43%,
      #b3d0ec 56%,
      #a6c3e0 58%,
      #b0cce8 76%,
      #c8dcf0 88%,
      #b6cee8 100%
    );
  box-shadow: 0 0 10px 1px rgba(0, 0, 0, 0.7), inset 0 0 0 1px #dceaf6;
`;

const DialogTitle = styled.header`
  display: flex;
  align-items: center;
  gap: 6px;
  height: 28px;

  > h2 {
    flex: 1;
    margin: 0;
    font-size: 12px;
    font-weight: normal;
    color: #111;
  }
`;

const CloseButton = styled.button`
  display: flex;
  align-items: center;
  justify-content: center;
  align-self: flex-start;
  width: 47px;
  height: 19px;
  border: 1px solid #5c2a28;
  border-top: 0;
  border-radius: 0 0 5px 5px;
  background: linear-gradient(#e3a69a, #d27464 48%, #b93c28 52%, #d0604c);
`;

const Client = styled.div`
  display: flex;
  flex: 1;
  flex-direction: column;
  padding: 10px 12px 12px 10px;
  border: 1px solid #56708c;
  background: #f0f0f0;
`;

const Columns = styled.div`
  display: grid;
  flex: 1;
  grid-template-columns: 274px 85px 1fr;
  gap: 5px;
`;

const Browser = styled.div`
  display: flex;
  flex-direction: column;
`;

const LibraryTools = styled.div`
  display: flex;
  height: 38px;
  padding-bottom: 4px;

  > button {
    display: flex;
    align-items: center;
    justify-content: center;
    width: 33px;
  }
`;

const PathBox = styled.div`
  position: relative;
  display: flex;
  height: 25px;
  margin-bottom: 5px;
  padding: 1px;
  border: 1px solid #8a949e;
  background: #fff;

  > select {
    flex: 1;
    padding: 0 20px 2px 2px;
    color: #000;
  }
`;

const PathArrow = styled.span`
  position: absolute;
  top: 0;
  right: 0;
  bottom: 0;
  display: flex;
  align-items: center;
  justify-content: center;
  width: 19px;
  border: 1px solid #707070;
  background: linear-gradient(#f4f4f4, #ebebeb 50%, #dcdcdc 50%, #cfcfcf);
  pointer-events: none;
`;

const ListBox = styled.div`
  flex: 1;
  border: 1px solid #828f9c;
  background: #fff;
`;

const PartTable = styled.table`
  width: 100%;
  border-collapse: collapse;

  th {
    height: 24px;
    padding: 2px 5px 0;
    border-bottom: 1px solid #dfe3e8;
    background: linear-gradient(#fff 40%, #f1f3f6);
    font-weight: normal;
    text-align: left;
  }
`;

const PartRow = styled.tr`
  > td {
    display: flex;
    align-items: center;
    height: 21px;
    padding: 0 4px;
  }
  svg {
    background: ${(props) => (props.$selected ? "#d3e6f8" : "none")};
  }
  span {
    padding: 2px 5px 3px 2px;
    background: ${(props) => (props.$selected ? "#f0f0f0" : "none")};
  }
`;

const Actions = styled.div`
  display: flex;
  flex-direction: column;
  justify-content: space-between;
  padding: 12px 0;
`;

const PushButton = styled.button`
  height: 21px;
  border: 1px solid ${(props) => (props.$focused ? "#3c7fb1" : "#707070")};
  border-radius: 3px;
  background: ${(props) =>
    props.$focused
      ? "linear-gradient(#eaf6fd, #d9f0fc 50%, #bee6fd 50%, #a7d9f5)"
      : "linear-gradient(#f2f2f2, #ebebeb 50%, #dddddd 50%, #cfcfcf)"};
  box-shadow: inset 0 0 0 1px ${(props) => (props.$focused ? "#48c8f0" : "#fbfbfb")};
  color: #000;
`;

const Viewer = styled.div`
  display: flex;
  flex-direction: column;
`;

const ViewerTabs = styled.div`
  display: flex;
  align-items: flex-end;
  height: 20px;
`;

const ViewerTab = styled.button`
  width: ${(props) => (props.$active ? 45 : 39)}px;
  height: ${(props) => (props.$active ? 21 : 18)}px;
  margin-bottom: ${(props) => (props.$active ? -1 : 0)}px;
  padding-right: ${(props) => (props.$active ? 6 : 4)}px;
  border: 1px solid #898c95;
  border-bottom: 0;
  background: ${(props) =>
    props.$active ? "#fff" : "linear-gradient(#f2f2f2, #ebebeb 50%, #dddddd 50%, #cfcfcf)"};
  color: #000;
`;

const ViewerPane = styled.div`
  display: flex;
  flex: 1;
  padding: 0 2px 4px;
  border: 1px solid #898c95;
  background: #fff;
`;

const Preview = styled.svg`
  width: 100%;
  height: 100%;
  background: #000;
`;

const DialogFooter = styled.footer`
  display: flex;
  justify-content: center;
  gap: 73px;
  padding-top: 17px;

  > button {
    width: 73px;
  }
`;

const Callout = styled.svg`
  position: absolute;
  top: 0;
  left: 0;
  pointer-events: none;
  filter: drop-shadow(2px 3px 2px rgba(0, 0, 0, 0.4));
`;
